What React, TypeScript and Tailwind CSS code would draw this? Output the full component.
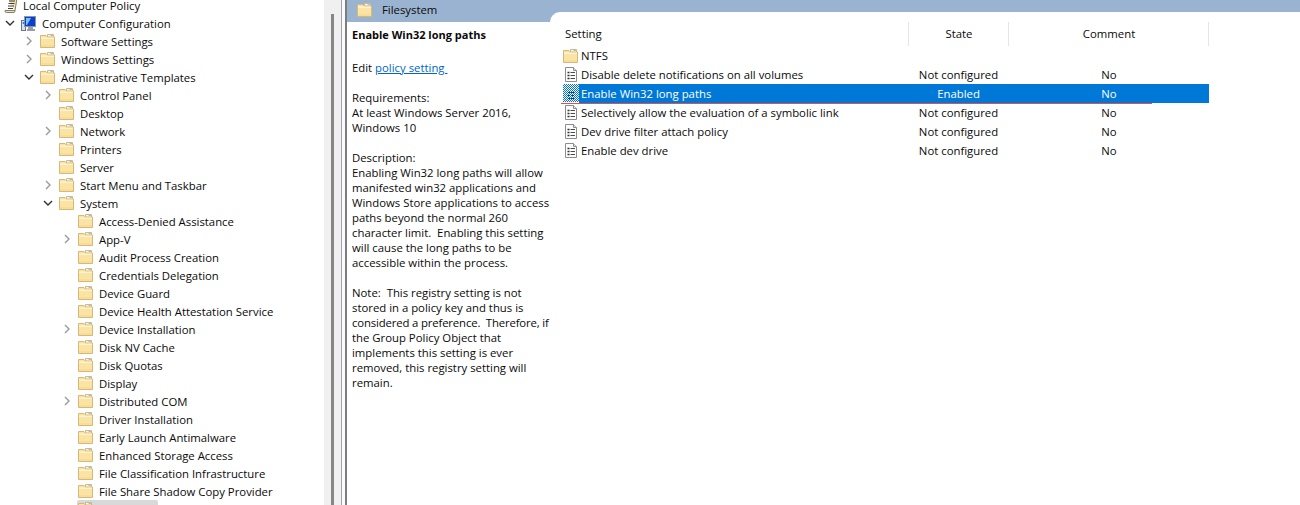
import React from "react";

const FONT = "font-['Open_Sans','Liberation_Sans',sans-serif]";

function Folder() {
  return (
    <svg width="15" height="14" viewBox="0 0 15 14" className="shrink-0">
      <path d="M0.5 1.5 H6 L7.5 3 H14.5 V13.5 H0.5 Z" fill="#fbe3a4" stroke="#d6b878" />
      <path d="M7.5 0.5 H13.5 V3 H7.5 Z" fill="#f6f9fc" stroke="#d6b878" />
      <path d="M10.5 1 H13 V2 H10.5 Z" fill="#9cc0e2" />
      <path d="M1 3.5 H14 V5 H1 Z" fill="#fff4d0" />
      <path d="M1 11 H14 V13 H1 Z" fill="#f8dc98" />
    </svg>
  );
}

function PolicyIcon() {
  return (
    <svg width="14" height="15" viewBox="0 0 14 15" className="shrink-0">
      <path d="M1.5 0.5 H9.5 L12.5 3.5 V14.5 H1.5 Z" fill="#fdfdfd" stroke="#8c8c8c" />
      <path d="M9.5 0.5 V3.5 H12.5" fill="#e6e6e6" stroke="#8c8c8c" />
      <path d="M3.5 5.5 H5.5 M3.5 8.5 H5.5 M3.5 11.5 H5.5" stroke="#303030" strokeWidth="1.4" />
      <path d="M6.5 5.5 H11 M6.5 8.5 H11 M6.5 11.5 H11" stroke="#4a4a4a" strokeWidth="1" />
    </svg>
  );
}

function PolicySelected() {
  return (
    <svg width="16" height="19" viewBox="0 0 16 19" className="shrink-0">
      <defs>
        <pattern id="dither" width="2" height="2" patternUnits="userSpaceOnUse">
          <rect width="2" height="2" fill="#0078d7" />
          <rect width="1" height="1" fill="#ffffff" />
          <rect x="1" y="1" width="1" height="1" fill="#ffffff" />
        </pattern>
      </defs>
      <rect x="0" y="0" width="16" height="18" fill="url(#dither)" />
      <path d="M5 8.5 H7 M5 11.5 H7 M5 14.5 H7 M8 8.5 H11 M8 11.5 H11 M8 14.5 H11" stroke="#0b3f78" strokeWidth="1" />
    </svg>
  );
}

function Scroll() {
  return (
    <svg width="14" height="15" viewBox="0 0 14 15" className="shrink-0">
      <path d="M3.5 0.5 H13 L11 12.5 H1 Q0.5 14.5 2.5 14.5 H10 Q11 14.5 11 12.5" fill="#ece0bd" stroke="#857f66" />
      <path d="M5 3 H11 M4.5 5.5 H10.5 M4 8 H10 M4 10.5 H9" stroke="#3f3e36" strokeWidth="1" />
    </svg>
  );
}

function Computer() {
  return (
    <svg width="15" height="15" viewBox="0 0 15 15" className="shrink-0">
      <rect x="0.5" y="4.5" width="4" height="10" fill="#dde2ea" stroke="#66748a" />
      <rect x="3.5" y="0.5" width="11" height="10" fill="#0a3fd0" stroke="#8b97a8" />
      <path d="M5 2 H10 L6 9 H5 Z" fill="#7cc0f5" />
      <path d="M7 12 H12 M6 14 H14" stroke="#77808e" strokeWidth="1.5" />
      <circle cx="2.5" cy="7" r="1" fill="#2b6fd0" />
    </svg>
  );
}

function Chevron({ open }: { open?: boolean }) {
  return open ? (
    <svg width="10" height="10" viewBox="0 0 10 10" className="shrink-0">
      <path d="M1 3 L5 7 L9 3" fill="none" stroke="#303030" strokeWidth="1.4" />
    </svg>
  ) : (
    <svg width="10" height="10" viewBox="0 0 10 10" className="shrink-0">
      <path d="M3 1 L7 5 L3 9" fill="none" stroke="#9a9a9a" strokeWidth="1.4" />
    </svg>
  );
}

const indent: Record<number, string> = {
  0: "pl-[3px]",
  1: "pl-[22px]",
  2: "pl-[41px]",
  3: "pl-[60px]",
};

type Node = { t: string; l: number; c?: "open" | "closed"; computer?: boolean };

const tree: Node[] = [
  { t: "Computer Configuration", l: 0, c: "open", computer: true },
  { t: "Software Settings", l: 1, c: "closed" },
  { t: "Windows Settings", l: 1, c: "closed" },
  { t: "Administrative Templates", l: 1, c: "open" },
  { t: "Control Panel", l: 2, c: "closed" },
  { t: "Desktop", l: 2 },
  { t: "Network", l: 2, c: "closed" },
  { t: "Printers", l: 2 },
  { t: "Server", l: 2 },
  { t: "Start Menu and Taskbar", l: 2, c: "closed" },
  { t: "System", l: 2, c: "open" },
  { t: "Access-Denied Assistance", l: 3 },
  { t: "App-V", l: 3, c: "closed" },
  { t: "Audit Process Creation", l: 3 },
  { t: "Credentials Delegation", l: 3 },
  { t: "Device Guard", l: 3 },
  { t: "Device Health Attestation Service", l: 3 },
  { t: "Device Installation", l: 3, c: "closed" },
  { t: "Disk NV Cache", l: 3 },
  { t: "Disk Quotas", l: 3 },
  { t: "Display", l: 3 },
  { t: "Distributed COM", l: 3, c: "closed" },
  { t: "Driver Installation", l: 3 },
  { t: "Early Launch Antimalware", l: 3 },
  { t: "Enhanced Storage Access", l: 3 },
  { t: "File Classification Infrastructure", l: 3 },
  { t: "File Share Shadow Copy Provider", l: 3 },
];

const rows = [
  { t: "Disable delete notifications on all volumes", s: "Not configured" },
  { t: "Enable Win32 long paths", s: "Enabled", sel: true },
  { t: "Selectively allow the evaluation of a symbolic link", s: "Not configured" },
  { t: "Dev drive filter attach policy", s: "Not configured" },
  { t: "Enable dev drive", s: "Not configured" },
];

function TreeRow({ n }: { n: Node }) {
  return (
    <div className={`flex h-[18px] items-center ${indent[n.l]}`}>
      <div className="flex w-[18px] shrink-0 pl-[2px]">
        {n.c && <Chevron open={n.c === "open"} />}
      </div>
      <div className="flex w-[21px] shrink-0">{n.computer ? <Computer /> : <Folder />}</div>
      <span className="whitespace-nowrap">{n.t}</span>
    </div>
  );
}

export default function App() {
  return (
    <div className={`flex h-[505px] w-[1300px] overflow-hidden bg-white text-[11.35px] leading-[15px] text-[#0a0a0a] ${FONT}`}>
      {/* tree */}
      <div className="mt-[-4px] w-[324px] shrink-0">
        <div className="flex h-[18px] items-center pl-[4px]">
          <div className="flex w-[19px] shrink-0"><Scroll /></div>
          <span className="whitespace-nowrap">Local Computer Policy</span>
        </div>
        {tree.map((n) => (
          <TreeRow key={n.t} n={n} />
        ))}
        <div className="ml-[77px] flex h-[18px] w-[81px] items-center rounded-t-[2px] bg-[#d9d9d9] pl-[1px]">
          <Folder />
        </div>
      </div>

      {/* tree scrollbar */}
      <div className="flex w-[17px] shrink-0 justify-center bg-[#f0f0f0] pt-[14px]">
        <div className="h-full w-[3px] bg-[#868686]" />
      </div>

      {/* splitter */}
      <div className="flex w-[6px] shrink-0">
        <div className="w-[1px] bg-[#a3a3b5]" />
        <div className="w-[3px] bg-[#fafafa]" />
        <div className="w-[2px] bg-[#7d7d7d]" />
      </div>

      {/* details */}
      <div className="flex min-w-0 flex-1 bg-[#9ab3d0]">
        <div className="flex w-[203px] shrink-0 flex-col">
          <div className="flex h-[22px] shrink-0 items-center pb-[3px] pl-[10px]">
            <Folder />
            <span className="ml-[10px]">Filesystem</span>
          </div>
          <div className="flex-1 whitespace-nowrap bg-white pl-[5px] pt-[5px]">
            <p className="text-[11px] font-bold">Enable Win32 long paths</p>
            <p className="mt-[18px]">
              Edit <span className="whitespace-pre text-[#0066cc] underline">policy setting </span>
            </p>
            <p className="mt-[15px]">Requirements:<br />At least Windows Server 2016,<br />Windows 10</p>
            <p className="mt-[15px]">
              Description:<br />
              Enabling Win32 long paths will allow<br />
              manifested win32 applications and<br />
              Windows Store applications to access<br />
              paths beyond the normal 260<br />
              character limit.&nbsp; Enabling this setting<br />
              will cause the long paths to be<br />
              accessible within the process.
            </p>
            <p className="mt-[15px]">
              Note:&nbsp; This registry setting is not<br />
              stored in a policy key and thus is<br />
              <span className="tracking-[-0.15px]">considered a preference.&nbsp; Therefore, if</span><br />
              the Group Policy Object that<br />
              implements this setting is ever<br />
              removed, this registry setting will<br />
              remain.
            </p>
          </div>
        </div>

        <div className="mt-[12px] min-w-0 flex-1 rounded-tl-[10px] bg-white">
          <div className="w-[659px] pt-[10px]">
            <div className="flex h-[24px] items-center">
              <div className="h-full flex-1 pl-[15px] leading-[24px]">Setting</div>
              <div className="h-full w-[100px] border-l border-[#e5e5e5] pl-[1px] text-center leading-[24px]">State</div>
              <div className="h-full w-[201px] border-x border-[#e5e5e5] pl-[1px] text-center leading-[24px]">Comment</div>
            </div>
            <div className="flex h-[19px] items-center pl-[13px]">
              <div className="w-[18px] shrink-0"><Folder /></div>
              <span>NTFS</span>
            </div>
            {rows.map((r) => (
              <div key={r.t} className="relative flex h-[19px] items-center pl-[13px]">
                <div className="flex w-[16px] shrink-0 justify-center">
                  {r.sel ? <PolicySelected /> : <PolicyIcon />}
                </div>
                <div className={`flex h-full flex-1 items-center ${r.sel ? "bg-[#0078d7] text-white" : ""}`}>
                  <div className="flex-1 pl-[2px]">{r.t}</div>
                  <div className="w-[100px] pl-[1px] text-center">{r.s}</div>
                  <div className="w-[201px] pl-[1px] text-center">No</div>
                </div>
                {r.sel && <div className="absolute bottom-[-1px] left-[11px] h-[1px] w-[591px] bg-[#d9534f]" />}
              </div>
            ))}
          </div>
        </div>
      </div>
    </div>
  );
}
